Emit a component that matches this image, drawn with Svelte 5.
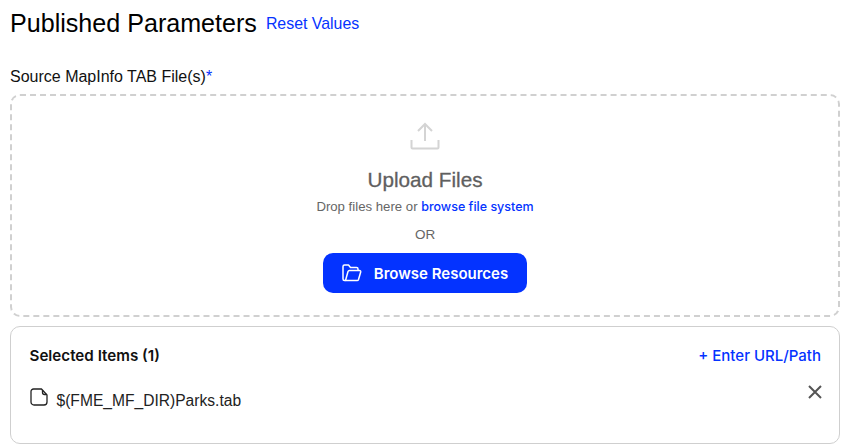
<script>
  const title = 'Published Parameters';
</script>

<main class="page">
  <header class="head">
    <h1>{title}</h1>
    <a class="reset" href="#reset">Reset Values</a>
  </header>

  <div class="label">Source MapInfo TAB File(s)<span class="req">*</span></div>

  <section class="drop">
    <svg class="upload" width="30" height="28" viewBox="0 0 30 28" fill="none" stroke="#d4d4d4" stroke-width="2">
      <path d="M15 19V2M8 9l7-7 7 7" />
      <path d="M1.500 18v7.500a1 1 0 0 0 1 1h25a1 1 0 0 0 1-1V18" />
    </svg>
    <h2>Upload Files</h2>
    <p class="hint">Drop files here or <a href="#b">browse file system</a></p>
    <p class="or">OR</p>
    <button class="browse">
      <svg width="20" height="18" viewBox="0 0 20 18" fill="none" stroke="#fff" stroke-width="1.500" stroke-linejoin="round">
        <path d="M3.500 16.500H2.500a1.500 1.500 0 0 1-1.500-1.500V2.500A1.500 1.500 0 0 1 2.500 1h4l2 2.500h6a1.500 1.500 0 0 1 1.500 1.500v1.500" />
        <path d="M3.500 16.500 6 7.500a1.500 1.500 0 0 1 1.400-1h10.100a1.200 1.200 0 0 1 1.200 1.500L16.500 15.500a1.500 1.500 0 0 1-1.500 1H3.500z" />
      </svg>
      <span>Browse Resources</span>
    </button>
  </section>

  <section class="selected">
    <div class="row-top">
      <strong>Selected Items (1)</strong>
      <a class="enter" href="#e">+ Enter URL/Path</a>
    </div>
    <div class="row-item">
      <svg class="file" width="18" height="18" viewBox="0 0 18 18" fill="none" stroke="#222" stroke-width="1.300" stroke-linejoin="round">
        <path d="M3.500 1h8L17 7v7a3 3 0 0 1-3 3H4a3 3 0 0 1-3-3V3.500A2.500 2.500 0 0 1 3.500 1z" />
        <path d="M12.500 2v2.500a2 2 0 0 0 2 2H16.500" />
      </svg>
      <span class="name">$(FME_MF_DIR)Parks.tab</span>
      <svg class="close" width="14" height="14" viewBox="0 0 14 14" fill="none" stroke="#555" stroke-width="2">
        <path d="M1 1l12 12M13 1L1 13" />
      </svg>
    </div>
  </section>
</main>

<style>
  :global(body) {
    margin: 0;
    background: #fff;
  }
  .page {
    width: 845px;
    height: 448px;
    box-sizing: border-box;
    padding: 7px 5px 0 10px;
    font-family: "Liberation Sans", sans-serif;
    color: #111;
    overflow: hidden;
  }
  a {
    color: #0433ff;
    text-decoration: none;
  }
  .head {
    display: flex;
    align-items: center;
    gap: 9px;
    height: 32px;
  }
  h1 {
    margin: 0;
    font-weight: 400;
    font-size: 25.100px;
    color: #000;
  }
  .reset {
    font-size: 15.900px;
    padding-top: 2px;
  }
  .label {
    margin-top: 28px;
    font-size: 16px;
    line-height: 20px;
    height: 27px;
  }
  .req {
    color: #0433ff;
  }
  .drop {
    width: 830px;
    height: 223px;
    box-sizing: border-box;
    border: 2px dashed #d0d0d0;
    border-radius: 10px;
    display: flex;
    flex-direction: column;
    align-items: center;
    padding-top: 26px;
  }
  .upload {
    display: block;
  }
  h2 {
    margin: 18px 0 0;
    font-size: 20.700px;
    font-weight: 400;
    line-height: 24px;
    color: #5f5f5f;
    -webkit-text-stroke: 0.3px #5f5f5f;
  }
  .hint {
    margin: 5px 0 0;
    padding-top: 1px;
    font-size: 13.200px;
    line-height: 18px;
    color: #666;
  }
  .hint a {
    font: 500 12.500px Inter, sans-serif;
  }
  .or {
    margin: 10px 0 0;
    font-size: 13.500px;
    line-height: 18px;
    color: #666;
  }
  .browse {
    margin-top: 9px;
    width: 204px;
    height: 40px;
    border: 0;
    border-radius: 10px;
    background: #0433ff;
    color: #fff;
    font: 600 15px Inter, sans-serif;
    display: flex;
    align-items: center;
    justify-content: center;
    gap: 12px;
  }
  .selected {
    margin-top: 9px;
    width: 830px;
    height: 118px;
    box-sizing: border-box;
    border: 1px solid #cfcfcf;
    border-radius: 10px;
    padding: 19px 18px 0 18.500px;
  }
  .row-top {
    display: flex;
    justify-content: space-between;
    align-items: center;
    font-family: Inter, sans-serif;
    font-size: 15.200px;
    line-height: 20px;
  }
  strong {
    font-weight: 600;
  }
  .enter {
    font-size: 15px;
    font-weight: 500;
  }
  .row-item {
    display: flex;
    align-items: flex-start;
    margin-top: 22px;
  }
  .file {
    margin-right: 9px;
  }
  .name {
    flex: 1;
    font-size: 15.600px;
    line-height: 20px;
    color: #222;
    margin-top: 3px;
  }
  .close {
    margin: -3px -1px 0 0;
  }
</style>
